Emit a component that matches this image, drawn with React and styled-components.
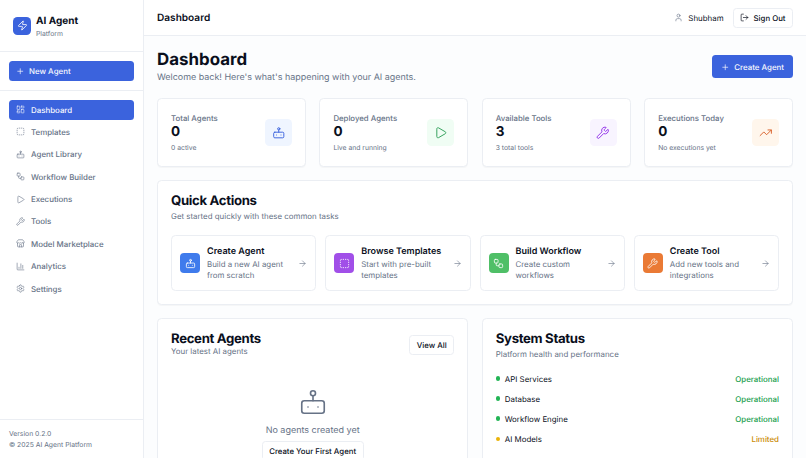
import React from 'react'
import styled, { createGlobalStyle } from 'styled-components'
import {
  Zap,
  Plus,
  LayoutDashboard,
  SquareDashed,
  Workflow,
  Play,
  Wrench,
  Store,
  ChartColumn,
  Settings,
  TrendingUp,
  User,
  LogOut,
  ArrowRight,
} from 'lucide-react'

const GlobalStyle = createGlobalStyle`
  html, body {
    margin: 0;
    padding: 0;
    height: 100%;
    overflow: hidden;
  }
  body {
    font-family: Inter, "Liberation Sans", sans-serif;
    background: #fff;
    color: #0a0f1c;
    text-rendering: geometricPrecision;
    -webkit-font-smoothing: antialiased;
  }
  * { box-sizing: border-box; }
`

// robot with the antenna ball on top, lucide's current Bot has a different head
const Bot = ({ size = 24, strokeWidth = 2 }) => (
  <svg
    width={size}
    height={size}
    viewBox='0 0 24 24'
    fill='none'
    stroke='currentColor'
    strokeWidth={strokeWidth}
    strokeLinecap='round'
    strokeLinejoin='round'
  >
    <rect x='3' y='11' width='18' height='10' rx='2' />
    <circle cx='12' cy='5' r='2' />
    <path d='M12 7v4' />
    <line x1='8' y1='16' x2='8' y2='16' />
    <line x1='16' y1='16' x2='16' y2='16' />
  </svg>
)

const Shell = styled.div`
  display: flex;
  width: 806px;
  height: 458px;
  overflow: hidden;
`

const Sidebar = styled.aside`
  width: 144px;
  flex: none;
  display: flex;
  flex-direction: column;
  background: #fff;
  border-right: 1px solid #ebeef3;
`

const Brand = styled.div`
  height: 52px;
  flex: none;
  display: flex;
  align-items: center;
  gap: 5px;
  padding: 0 13px;
  border-bottom: 1px solid #ebeef3;
`

const BrandMark = styled.div`
  width: 18px;
  height: 18px;
  border-radius: 4.5px;
  background: #3b63dd;
  color: #fff;
  display: flex;
  align-items: center;
  justify-content: center;
`

const BrandText = styled.div`
  padding-top: 1px;
`

const BrandName = styled.div`
  font-size: 10px;
  font-weight: 700;
  line-height: 14px;
  color: #0a0f1c;
`

const BrandSub = styled.div`
  font-size: 6.8px;
  line-height: 11px;
  color: #6b7688;
`

const NewAgentWrap = styled.div`
  padding: 9px;
  border-bottom: 1px solid #ebeef3;
`

const PrimaryButton = styled.button`
  display: flex;
  align-items: center;
  justify-content: ${(p) => (p.$wide ? 'flex-start' : 'center')};
  gap: 4.5px;
  width: ${(p) => (p.$wide ? '100%' : 'auto')};
  height: ${(p) => (p.$wide ? '20px' : '23px')};
  padding: ${(p) => (p.$wide ? '0 7px' : '0 9px')};
  border: none;
  border-radius: 3.5px;
  background: #3b63dd;
  color: #f6f8fd;
  font-family: inherit;
  font-size: 7.9px;
  font-weight: 500;
  text-rendering: inherit;
`

const Nav = styled.nav`
  flex: 1;
  display: flex;
  flex-direction: column;
  gap: 2.4px;
  padding: 8.5px 9px;
`

const NavItem = styled.div`
  display: flex;
  align-items: center;
  gap: 6.5px;
  height: 20px;
  padding: 0 6.5px;
  border-radius: 3.5px;
  font-size: 7.9px;
  font-weight: 500;
  background: ${(p) => (p.$active ? '#3b63dd' : 'transparent')};
  color: ${(p) => (p.$active ? '#f6f8fd' : '#667286')};
`

const SidebarFoot = styled.div`
  flex: none;
  height: 39px;
  padding: 8px 9px 0;
  border-top: 1px solid #ebeef3;
  font-size: 6.8px;
  line-height: 11px;
  color: #667286;
`

const Content = styled.div`
  flex: 1;
  min-width: 0;
  display: flex;
  flex-direction: column;
  background: #fcfdfe;
`

const Topbar = styled.header`
  height: 36px;
  flex: none;
  display: flex;
  align-items: center;
  justify-content: space-between;
  padding: 0 13px;
  background: #fff;
  border-bottom: 1px solid #ebeef3;
`

const TopTitle = styled.div`
  font-size: 10.1px;
  font-weight: 600;
  color: #0a0f1c;
`

const TopRight = styled.div`
  display: flex;
  align-items: center;
  gap: 9px;
`

const UserName = styled.div`
  display: flex;
  align-items: center;
  gap: 5px;
  font-size: 7.9px;
  font-weight: 400;
  color: #0a0f1c;
  svg { color: #667286; }
`

const OutlineButton = styled.button`
  display: flex;
  align-items: center;
  justify-content: center;
  gap: 4.5px;
  height: 20px;
  padding: 0 6.5px;
  border: 1px solid #ebeef3;
  border-radius: 3.5px;
  background: #fff;
  color: #0a0f1c;
  font-family: inherit;
  font-size: 7.8px;
  font-weight: 500;
  text-rendering: inherit;
`

const ViewAll = styled(OutlineButton)`
  margin-top: 3px;
`

const Main = styled.main`
  flex: 1;
  min-height: 0;
  overflow: hidden;
  display: flex;
  flex-direction: column;
  gap: 13.5px;
  padding: 13px;
`

const PageHead = styled.div`
  display: flex;
  justify-content: space-between;
  align-items: center;
  height: 35.5px;
  flex: none;
`

const PageTitle = styled.h1`
  margin: 0;
  font-size: 16.9px;
  line-height: 21px;
  font-weight: 700;
  color: #0a0f1c;
`

const PageSub = styled.p`
  margin: 0.5px 0 0;
  font-size: 8.95px;
  line-height: 13px;
  color: #667286;
`

const StatGrid = styled.div`
  display: grid;
  grid-template-columns: repeat(4, 1fr);
  gap: 13.5px;
  flex: none;
`

const Card = styled.section`
  background: #fff;
  border: 1px solid #ebeef3;
  border-radius: 4.5px;
  box-shadow: 0 1px 1px rgba(10, 15, 28, 0.03);
`

const StatCard = styled(Card)`
  height: 68.5px;
  padding: 0 13px;
  display: flex;
  align-items: center;
  justify-content: space-between;
`

const StatLabel = styled.div`
  font-size: 7.8px;
  line-height: 12px;
  font-weight: 500;
  color: #667286;
`

const StatValue = styled.div`
  font-size: 13.5px;
  line-height: 16px;
  font-weight: 700;
  color: #0a0f1c;
`

const StatNote = styled.div`
  margin-top: 2px;
  font-size: 6.8px;
  line-height: 11px;
  color: #667286;
`

const StatIcon = styled.div`
  width: 27px;
  height: 27px;
  border-radius: 4.5px;
  display: flex;
  align-items: center;
  justify-content: center;
  background: ${(p) => p.$bg};
  color: ${(p) => p.$fg};
`

const QuickCard = styled(Card)`
  flex: none;
  height: 124.5px;
  padding: 13px;
`

const SectionTitle = styled.h2`
  margin: 0;
  font-size: 13.2px;
  line-height: 14px;
  font-weight: 700;
  letter-spacing: -0.33px;
  color: #0a0f1c;
`

const SectionSub = styled.p`
  margin: ${(p) => (p.$tight ? '0' : '3px')} 0 0;
  font-size: 7.9px;
  line-height: 10px;
  color: #667286;
`

const QuickGrid = styled.div`
  display: grid;
  grid-template-columns: repeat(4, 1fr);
  gap: 9px;
  margin-top: 14px;
`

const QuickItem = styled.div`
  height: 56px;
  display: flex;
  align-items: center;
  gap: 7px;
  padding: 0 8px;
  border: 1px solid #ebeef3;
  border-radius: 4.5px;
  background: #fff;
`

const QuickIcon = styled.div`
  width: 20px;
  height: 20px;
  flex: none;
  border-radius: 4px;
  display: flex;
  align-items: center;
  justify-content: center;
  color: #fff;
  background: ${(p) => p.$bg};
`

const QuickText = styled.div`
  flex: 1;
  min-width: 0;
  padding-top: 1.5px;
`

const QuickName = styled.div`
  font-size: 9px;
  line-height: 12px;
  font-weight: 600;
  color: #0a0f1c;
`

const QuickDesc = styled.div`
  margin-top: 0.5px;
  font-size: 7.9px;
  line-height: 11.2px;
  color: #667286;
`

const Arrow = styled(ArrowRight)`
  flex: none;
  color: #667286;
`

const BottomGrid = styled.div`
  display: grid;
  grid-template-columns: 1fr 1fr;
  gap: 13.5px;
  flex: none;
`

const PanelCard = styled(Card)`
  height: 180px;
  padding: 13px;
`

const PanelHead = styled.div`
  display: flex;
  align-items: flex-start;
  justify-content: space-between;
`

const Empty = styled.div`
  display: flex;
  flex-direction: column;
  align-items: center;
  margin-top: 31px;
  color: #667286;
`

const EmptyText = styled.div`
  margin: 6.5px 0 4.5px;
  font-size: 9px;
  line-height: 13px;
`

const StatusList = styled.div`
  display: flex;
  flex-direction: column;
  gap: 9.1px;
  margin-top: 14px;
`

const StatusRow = styled.div`
  display: flex;
  align-items: center;
  justify-content: space-between;
  height: 11px;
  font-size: 7.9px;
`

const StatusName = styled.div`
  display: flex;
  align-items: center;
  gap: 4.5px;
  color: #0a0f1c;
`

const Dot = styled.span`
  width: 4.5px;
  height: 4.5px;
  border-radius: 50%;
  background: ${(p) => (p.$warn ? '#eab308' : '#22b455')};
`

const StatusValue = styled.div`
  font-weight: 500;
  color: ${(p) => (p.$warn ? '#ca8a04' : '#22a04f')};
`

const navItems = [
  { label: 'Dashboard', icon: LayoutDashboard, active: true },
  { label: 'Templates', icon: SquareDashed },
  { label: 'Agent Library', icon: Bot },
  { label: 'Workflow Builder', icon: Workflow },
  { label: 'Executions', icon: Play },
  { label: 'Tools', icon: Wrench },
  { label: 'Model Marketplace', icon: Store },
  { label: 'Analytics', icon: ChartColumn },
  { label: 'Settings', icon: Settings },
]

const stats = [
  { label: 'Total Agents', value: 0, note: '0 active', icon: Bot, bg: '#eff5ff', fg: '#3b63dd' },
  { label: 'Deployed Agents', value: 0, note: 'Live and running', icon: Play, bg: '#f0fdf4', fg: '#2f9e58' },
  { label: 'Available Tools', value: 3, note: '3 total tools', icon: Wrench, bg: '#f8f4ff', fg: '#9333ea' },
  { label: 'Executions Today', value: 0, note: 'No executions yet', icon: TrendingUp, bg: '#fff6ec', fg: '#d9622b' },
]

const actions = [
  { name: 'Create Agent', desc: 'Build a new AI agent from scratch', icon: Bot, bg: '#3f7bec' },
  { name: 'Browse Templates', desc: 'Start with pre-built templates', icon: SquareDashed, bg: '#a14fe8' },
  { name: 'Build Workflow', desc: 'Create custom workflows', icon: Workflow, bg: '#4fbf67' },
  { name: 'Create Tool', desc: 'Add new tools and integrations', icon: Wrench, bg: '#ea7a35' },
]

const services = [
  { name: 'API Services', value: 'Operational' },
  { name: 'Database', value: 'Operational' },
  { name: 'Workflow Engine', value: 'Operational' },
  { name: 'AI Models', value: 'Limited', warn: true },
]

export default function App() {
  return (
    <Shell>
      <GlobalStyle />
      <Sidebar>
        <Brand>
          <BrandMark>
            <Zap size={11} strokeWidth={1.8} />
          </BrandMark>
          <BrandText>
            <BrandName>AI Agent</BrandName>
            <BrandSub>Platform</BrandSub>
          </BrandText>
        </Brand>
        <NewAgentWrap>
          <PrimaryButton $wide>
            <Plus size={8.5} />
            New Agent
          </PrimaryButton>
        </NewAgentWrap>
        <Nav>
          {navItems.map((item) => (
            <NavItem key={item.label} $active={item.active}>
              <item.icon size={9} strokeWidth={1.6} />
              {item.label}
            </NavItem>
          ))}
        </Nav>
        <SidebarFoot>
          <div>Version 0.2.0</div>
          <div>© 2025 AI Agent Platform</div>
        </SidebarFoot>
      </Sidebar>
      <Content>
        <Topbar>
          <TopTitle>Dashboard</TopTitle>
          <TopRight>
            <UserName>
              <User size={9} strokeWidth={1.6} />
              Shubham
            </UserName>
            <OutlineButton>
              <LogOut size={9} strokeWidth={1.8} />
              Sign Out
            </OutlineButton>
          </TopRight>
        </Topbar>
        <Main>
          <PageHead>
            <div>
              <PageTitle>Dashboard</PageTitle>
              <PageSub>Welcome back! Here's what's happening with your AI agents.</PageSub>
            </div>
            <PrimaryButton>
              <Plus size={8.5} />
              Create Agent
            </PrimaryButton>
          </PageHead>
          <StatGrid>
            {stats.map((stat) => (
              <StatCard key={stat.label}>
                <div>
                  <StatLabel>{stat.label}</StatLabel>
                  <StatValue>{stat.value}</StatValue>
                  <StatNote>{stat.note}</StatNote>
                </div>
                <StatIcon $bg={stat.bg} $fg={stat.fg}>
                  <stat.icon size={13.5} strokeWidth={1.7} />
                </StatIcon>
              </StatCard>
            ))}
          </StatGrid>
          <QuickCard>
            <SectionTitle>Quick Actions</SectionTitle>
            <SectionSub>Get started quickly with these common tasks</SectionSub>
            <QuickGrid>
              {actions.map((action) => (
                <QuickItem key={action.name}>
                  <QuickIcon $bg={action.bg}>
                    <action.icon size={11} strokeWidth={1.8} />
                  </QuickIcon>
                  <QuickText>
                    <QuickName>{action.name}</QuickName>
                    <QuickDesc>{action.desc}</QuickDesc>
                  </QuickText>
                  <Arrow size={9} strokeWidth={1.6} />
                </QuickItem>
              ))}
            </QuickGrid>
          </QuickCard>
          <BottomGrid>
            <PanelCard>
              <PanelHead>
                <div>
                  <SectionTitle>Recent Agents</SectionTitle>
                  <SectionSub $tight>Your latest AI agents</SectionSub>
                </div>
                <ViewAll>View All</ViewAll>
              </PanelHead>
              <Empty>
                <Bot size={30} strokeWidth={1.3} />
                <EmptyText>No agents created yet</EmptyText>
                <OutlineButton>Create Your First Agent</OutlineButton>
              </Empty>
            </PanelCard>
            <PanelCard>
              <SectionTitle>System Status</SectionTitle>
              <SectionSub>Platform health and performance</SectionSub>
              <StatusList>
                {services.map((service) => (
                  <StatusRow key={service.name}>
                    <StatusName>
                      <Dot $warn={service.warn} />
                      {service.name}
                    </StatusName>
                    <StatusValue $warn={service.warn}>{service.value}</StatusValue>
                  </StatusRow>
                ))}
              </StatusList>
            </PanelCard>
          </BottomGrid>
        </Main>
      </Content>
    </Shell>
  )
}
